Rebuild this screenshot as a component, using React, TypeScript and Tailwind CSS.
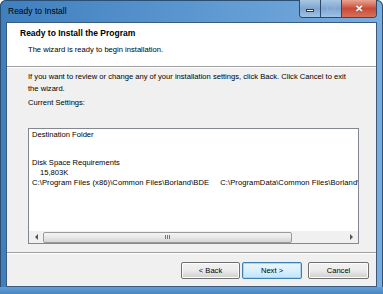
import React from 'react';

const font = { fontFamily: '"Liberation Sans", Arial, sans-serif' };

const WinButton: React.FC<{ label: string; primary?: boolean; className?: string }> = ({ label, primary, className }) => (
  <div
    className={`flex h-[17px] items-center justify-center rounded-[2px] border text-[7.6px] text-black ${
      primary
        ? 'border-[#3c7fb1] bg-gradient-to-b from-[#eaf6fd] via-[#d9f0fc] to-[#bee6fd] shadow-[inset_0_0_0_1px_#a6d8f5]'
        : 'border-[#707070] bg-gradient-to-b from-[#f2f2f2] via-[#ebebeb] to-[#cfcfcf] shadow-[inset_0_0_0_1px_#fcfcfc]'
    } ${className ?? ''}`}
  >
    {label}
  </div>
);

export default function App() {
  return (
    <div className="h-[294px] w-[383px] overflow-hidden bg-white" style={font}>
      <div className="flex h-[294px] w-[383px] flex-col rounded-t-[6px] bg-gradient-to-r from-[#3f7fbe] via-[#5b97cf] to-[#79addf] shadow-[inset_0_0_0_1px_#2c4e72]">
        {/* title bar */}
        <div className="flex h-[22px] items-start justify-between">
          <div className="pl-[8px] pt-[7px] text-[8.5px] leading-none text-black">Ready to Install</div>
          <div className="mr-[6px] flex h-[18px] overflow-hidden rounded-b-[4px] border border-t-0 border-[#2a4a6c]">
            <div className="flex w-[21px] items-center justify-center border-r border-[#2a4a6c] bg-gradient-to-b from-[#a9c6e4] via-[#7fa6d0] to-[#9fc3e6]">
              <div className="mt-[4px] h-[3px] w-[8px] border border-[#3a3a3a] bg-white" />
            </div>
            <div className="flex w-[21px] items-center justify-center border-r border-[#2a4a6c] bg-gradient-to-b from-[#a9c6e4] via-[#7fa6d0] to-[#9fc3e6]">
              <div className="h-[7px] w-[8px] border border-[#9db5cd] opacity-70" />
            </div>
            <div className="flex w-[34px] items-center justify-center bg-gradient-to-b from-[#e8a493] via-[#c94a36] to-[#d7715a]">
              <span className="text-[10px] font-bold leading-none text-white [text-shadow:0_0_1px_#555]">✕</span>
            </div>
          </div>
        </div>

        {/* client area */}
        <div className="mx-[6px] flex h-[265px] flex-col border border-[#3b5a7d] bg-[#f0f0f0]">
          <div className="h-[43px] bg-white">
            <div className="pl-[13px] pt-[5px] text-[8.5px] font-bold leading-[10px] text-black">Ready to Install the Program</div>
            <div className="pl-[21px] pt-[7px] text-[7.6px] leading-[10px] text-black">The wizard is ready to begin installation.</div>
          </div>
          <div className="h-px bg-[#a0a0a0]" />
          <div className="h-px bg-white" />

          <div className="flex h-[184px] flex-col px-[21px]">
            <div className="pt-[3px] text-[7.6px] leading-[12px] text-black">
              If you want to review or change any of your installation settings, click Back. Click Cancel to exit the wizard.
            </div>
            <div className="pt-[3px] text-[7.6px] leading-[10px] text-black">Current Settings:</div>

            <div className="mt-[20px] flex h-[116px] w-[331px] flex-col border border-[#828790] bg-white">
              <div className="flex-1 overflow-hidden whitespace-nowrap pl-[3px] pt-[1px] text-[7.6px] leading-[10px] text-black">
                <div>Destination Folder</div>
                <div className="h-[18px]" />
                <div>Disk Space Requirements</div>
                <div className="pl-[8px]">15,803K</div>
                <div className="tracking-[0.08px]">
                  C:\Program Files (x86)\Common Files\Borland\BDE<span className="inline-block w-[11px]" />C:\ProgramData\Common Files\Borland\BDE
                </div>
              </div>
              <div className="flex h-[12px] items-center bg-[#f0f0f0]">
                <div className="flex w-[14px] items-center justify-center">
                  <div className="h-0 w-0 border-y-[3px] border-r-[3px] border-y-transparent border-r-[#555]" />
                </div>
                <div className="flex h-[11px] w-[249px] items-center justify-center rounded-[2px] border border-[#9a9a9a] bg-gradient-to-b from-[#f4f4f4] via-[#e8e8e8] to-[#d4d4d4]">
                  <div className="flex gap-[1px]">
                    <div className="h-[4px] w-px bg-[#777]" />
                    <div className="h-[4px] w-px bg-[#777]" />
                    <div className="h-[4px] w-px bg-[#777]" />
                  </div>
                </div>
                <div className="flex-1" />
                <div className="flex w-[14px] items-center justify-center">
                  <div className="h-0 w-0 border-y-[3px] border-l-[3px] border-y-transparent border-l-[#555]" />
                </div>
              </div>
            </div>
          </div>

          <div className="h-px bg-[#a0a0a0]" />
          <div className="h-px bg-white" />
          <div className="flex flex-1 items-start justify-end gap-[2px] pr-[7px] pt-[8px]">
            <WinButton label="< Back" className="w-[59px]" />
            <WinButton label="Next >" primary className="w-[60px]" />
            <WinButton label="Cancel" className="ml-[4px] w-[61px]" />
          </div>
        </div>
        <div className="flex-1 bg-gradient-to-b from-[#5f9fd6] to-[#4a86c0]" />
      </div>
    </div>
  );
}
